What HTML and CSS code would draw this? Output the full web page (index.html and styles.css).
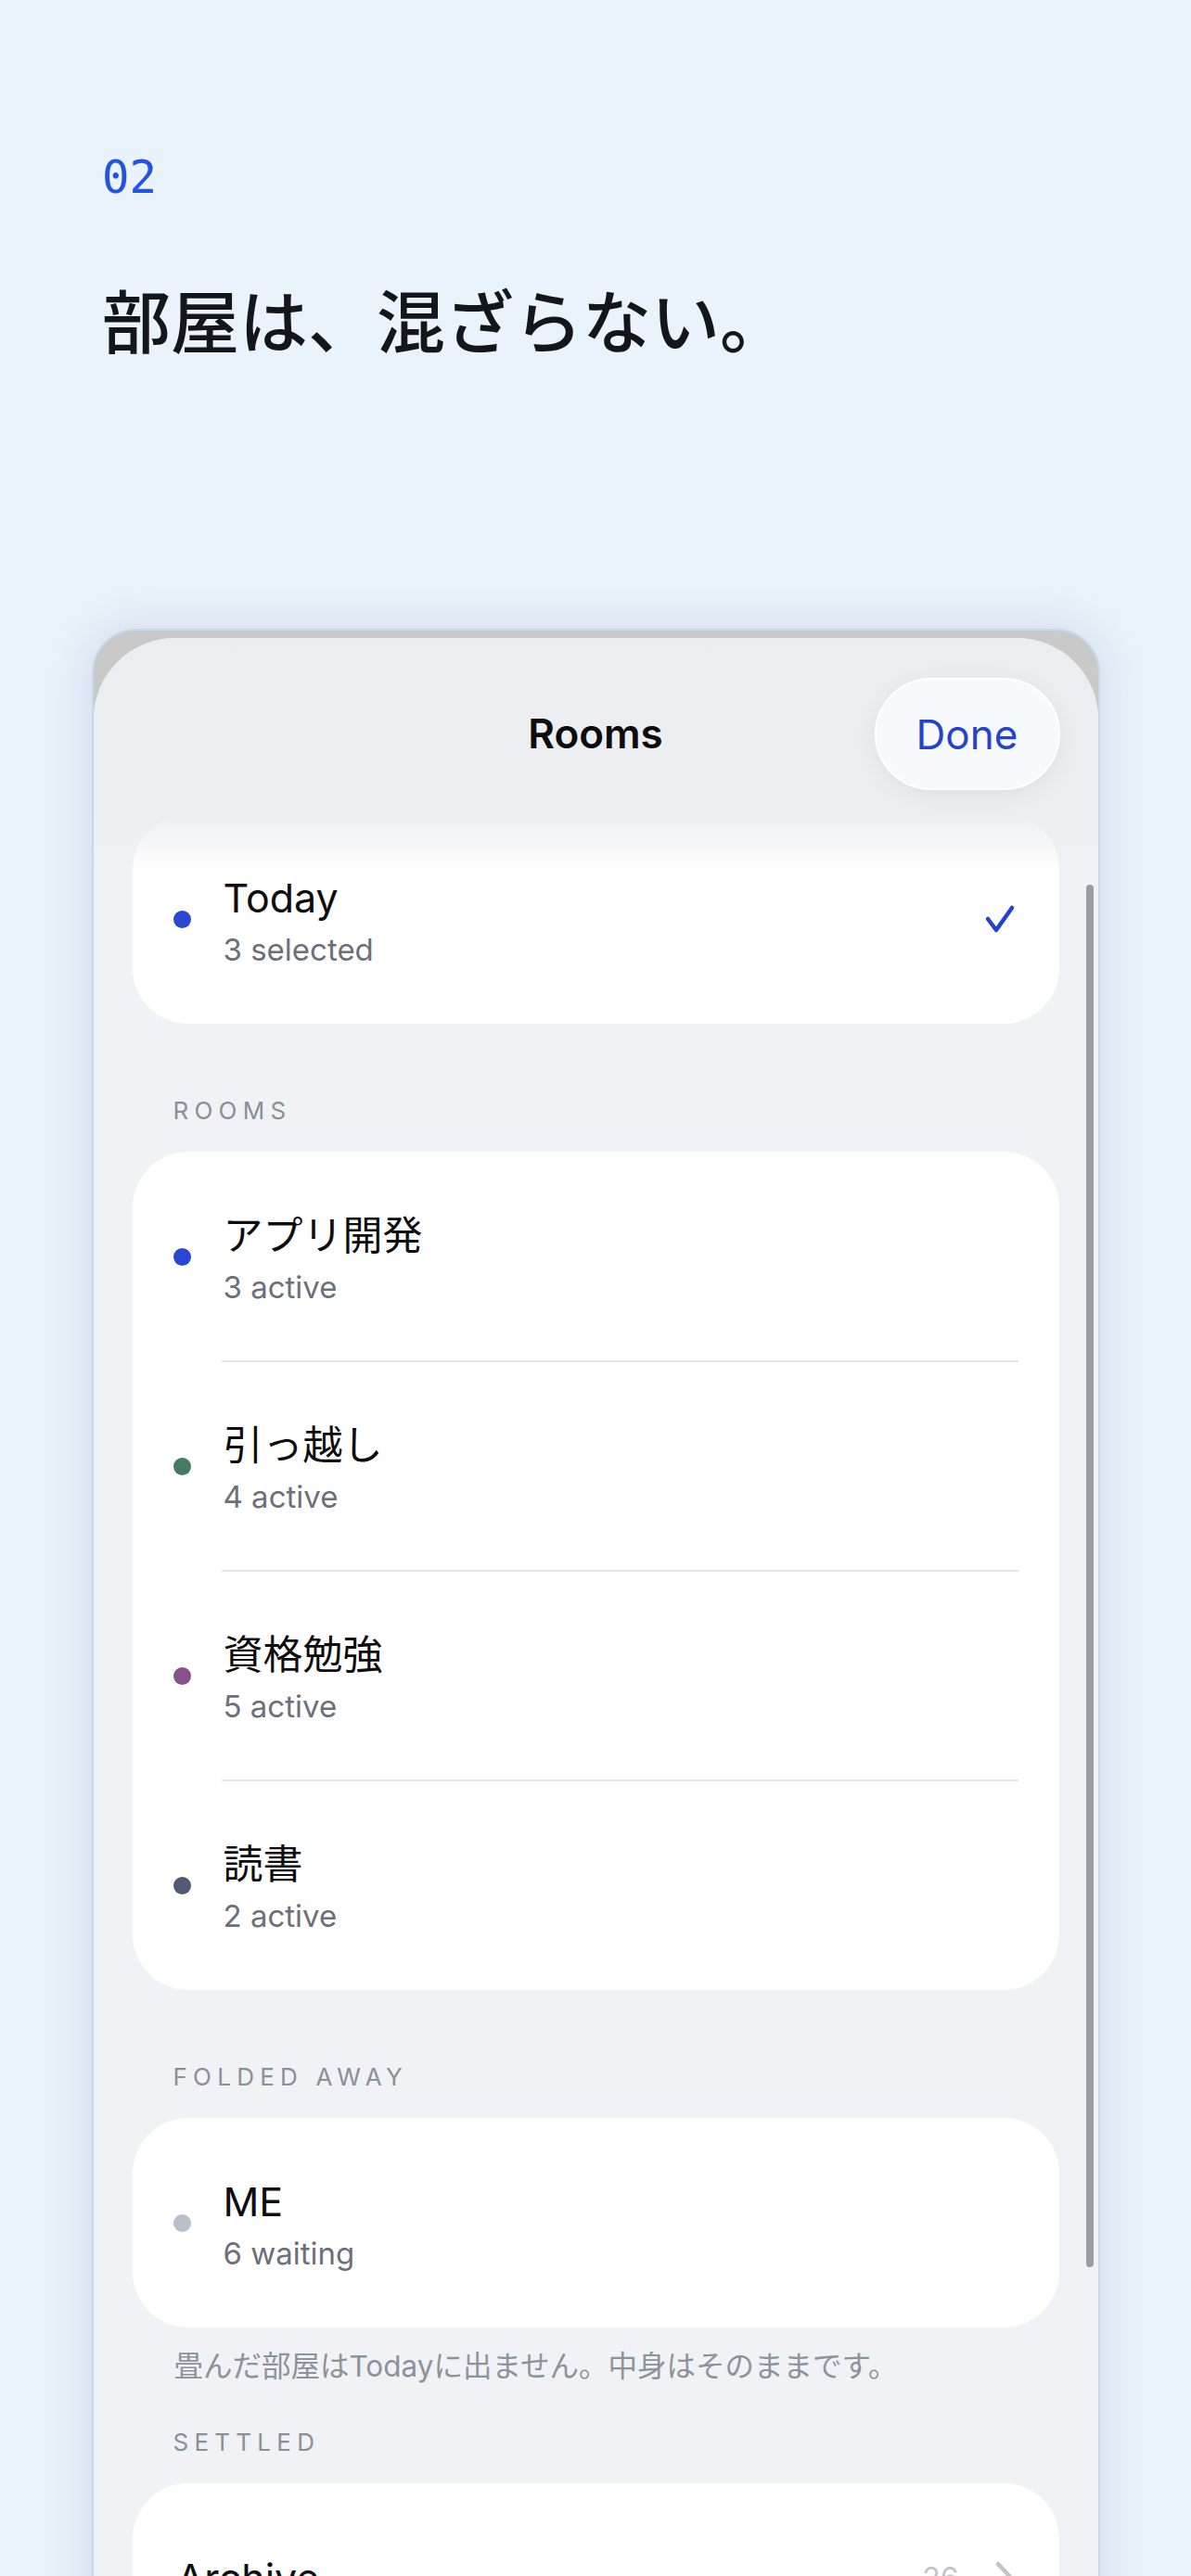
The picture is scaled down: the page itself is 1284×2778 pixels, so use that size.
FILE: index.html
```html
<!DOCTYPE html>
<html lang="ja">
<head>
    <meta charset="UTF-8">
    <meta name="viewport" content="width=device-width, initial-scale=1.0">
    <title>部屋は、混ざらない。</title>
    <link rel="stylesheet" href="styles.css">
</head>
<body>
    <div class="page">
        <div class="intro">
            <div class="step">02</div>
            <h1 class="headline">部屋は、混ざらない。</h1>
        </div>

        <div class="device">
            <div class="sheet">
                <div class="sheet-header">
                    <span></span>
                    <h2 class="sheet-title">Rooms</h2>
                    <button class="done-btn">Done</button>
                </div>

                <div class="sheet-body">
                    <div class="card">
                        <div class="row">
                            <span class="dot dot-blue"></span>
                            <div class="row-text">
                                <div class="row-title">Today</div>
                                <div class="row-sub">3 selected</div>
                            </div>
                            <svg class="check" width="36" height="34" viewBox="0 0 36 34">
                                <polyline points="5,17 14,29 31,5" fill="none" stroke="#2443cc" stroke-width="4.5" stroke-linecap="round" stroke-linejoin="round"/>
                            </svg>
                        </div>
                    </div>

                    <div class="section-label">ROOMS</div>
                    <div class="card group">
                        <div class="row">
                            <span class="dot dot-blue"></span>
                            <div class="row-text">
                                <div class="row-title">アプリ開発</div>
                                <div class="row-sub">3 active</div>
                            </div>
                        </div>
                        <div class="row">
                            <span class="dot dot-green"></span>
                            <div class="row-text">
                                <div class="row-title">引っ越し</div>
                                <div class="row-sub">4 active</div>
                            </div>
                        </div>
                        <div class="row">
                            <span class="dot dot-purple"></span>
                            <div class="row-text">
                                <div class="row-title">資格勉強</div>
                                <div class="row-sub">5 active</div>
                            </div>
                        </div>
                        <div class="row">
                            <span class="dot dot-slate"></span>
                            <div class="row-text">
                                <div class="row-title">読書</div>
                                <div class="row-sub">2 active</div>
                            </div>
                        </div>
                    </div>

                    <div class="section-label">FOLDED AWAY</div>
                    <div class="card">
                        <div class="row">
                            <span class="dot dot-gray"></span>
                            <div class="row-text">
                                <div class="row-title">ME</div>
                                <div class="row-sub">6 waiting</div>
                            </div>
                        </div>
                    </div>
                    <p class="footnote">畳んだ部屋はTodayに出ません。中身はそのままです。</p>

                    <div class="section-label after-note">SETTLED</div>
                    <div class="card">
                        <div class="row row-link">
                            <div class="row-title link-title">Archive</div>
                            <span class="count">26</span>
                            <svg class="chevron" width="22" height="38" viewBox="0 0 22 38">
                                <polyline points="4,4 18,19 4,34" fill="none" stroke="#c4c4c7" stroke-width="4.5" stroke-linecap="round" stroke-linejoin="round"/>
                            </svg>
                        </div>
                    </div>
                </div>

                <div class="scrollbar"></div>
            </div>
        </div>
    </div>
</body>
</html>
```

FILE: styles.css
```css
body {
    margin: 0;
    background-color: #eaf2fa;
    font-family: Inter, "Noto Sans CJK JP", sans-serif;
}
.page {
    height: 2778px;
    overflow: hidden;
    padding-top: 162px;
    box-sizing: border-box;
}
.intro {
    padding-left: 110px;
}
.step {
    font-family: "DejaVu Sans Mono", monospace;
    font-size: 49px;
    line-height: 60px;
    color: #2453e0;
}
.headline {
    margin: 77px 0 0;
    font-family: "Noto Sans CJK JP", sans-serif;
    font-size: 74px;
    line-height: 88px;
    font-weight: 500;
    color: #141619;
}

/* phone frame */
.device {
    width: 1087px;
    height: 2300px;
    margin: 291px auto 0;
    box-sizing: border-box;
    border: 2px solid #c7d9e9;
    border-radius: 48px;
    background-color: #c9c9c9;
    overflow: hidden;
    box-shadow: 0 0 50px rgba(50, 90, 140, 0.16);
}
.sheet {
    position: relative;
    margin-top: 8px;
    height: 100%;
    background-color: #f0f2f5;
    border-radius: 88px 88px 0 0;
}
.sheet-header {
    position: relative;
    height: 190px;
    box-sizing: border-box;
    padding: 43px 41px 0;
    display: grid;
    grid-template-columns: 1fr auto 1fr;
    align-items: start;
    background: linear-gradient(#ecedf0, #edeef1);
    border-radius: 88px 88px 0 0;
}
.sheet-header::after {
    content: "";
    position: absolute;
    left: 0;
    right: 0;
    top: 100%;
    height: 64px;
    background: linear-gradient(rgba(237, 238, 241, 0.95), rgba(240, 242, 245, 0));
    z-index: 1;
}
.sheet-title {
    margin: 0;
    font-size: 44px;
    font-weight: 600;
    line-height: 121px;
    color: #0c0c0e;
}
.done-btn {
    justify-self: end;
    width: 200px;
    height: 121px;
    border: 2px solid #ffffff;
    border-radius: 61px;
    background-color: #f8f9fd;
    box-shadow: 0 6px 26px rgba(0, 0, 0, 0.06);
    font-family: Inter, sans-serif;
    font-size: 44px;
    color: #2443cc;
    padding: 0;
}
.sheet-body {
    padding: 0 42px;
}
.card {
    background-color: #ffffff;
    border-radius: 60px;
}
.row {
    position: relative;
    height: 226px;
    box-sizing: border-box;
    padding: 0 44px;
    display: flex;
    align-items: center;
}
.group .row + .row::before {
    content: "";
    position: absolute;
    top: -1px;
    left: 96px;
    right: 44px;
    height: 2px;
    background-color: #e6e6e8;
}
.dot {
    flex: none;
    width: 19px;
    height: 19px;
    border-radius: 50%;
    margin-right: 35px;
}
.dot-blue { background-color: #2a47d1; }
.dot-green { background-color: #447a63; }
.dot-purple { background-color: #87508a; }
.dot-slate { background-color: #4f5b72; }
.dot-gray { background-color: #b9bfcb; }
.row-text {
    flex: 1;
    padding-top: 4px;
}
.row-title {
    font-size: 43px;
    line-height: 52px;
    color: #0e0e10;
}
.row-sub {
    margin-top: 10px;
    font-size: 33px;
    line-height: 40px;
    color: #6c707a;
}
.check {
    flex: none;
    margin-right: 2px;
}
.section-label {
    margin: 78px 0 28px;
    padding-left: 44px;
    font-size: 26px;
    line-height: 32px;
    letter-spacing: 0.24em;
    color: #8b8f98;
}
.section-label.after-note {
    margin-top: 46px;
}
.footnote {
    margin: 22px 0 0;
    padding-left: 45px;
    font-size: 31.5px;
    line-height: 40px;
    color: #8e929b;
}
.row-link {
    height: 204px;
    padding: 0 48px;
}
.link-title {
    flex: 1;
}
.count {
    font-size: 32px;
    color: #c2c4ca;
    margin-right: 38px;
}
.scrollbar {
    position: absolute;
    top: 266px;
    right: 5px;
    width: 8px;
    height: 1491px;
    border-radius: 4px;
    background-color: #9d9da0;
}
```
